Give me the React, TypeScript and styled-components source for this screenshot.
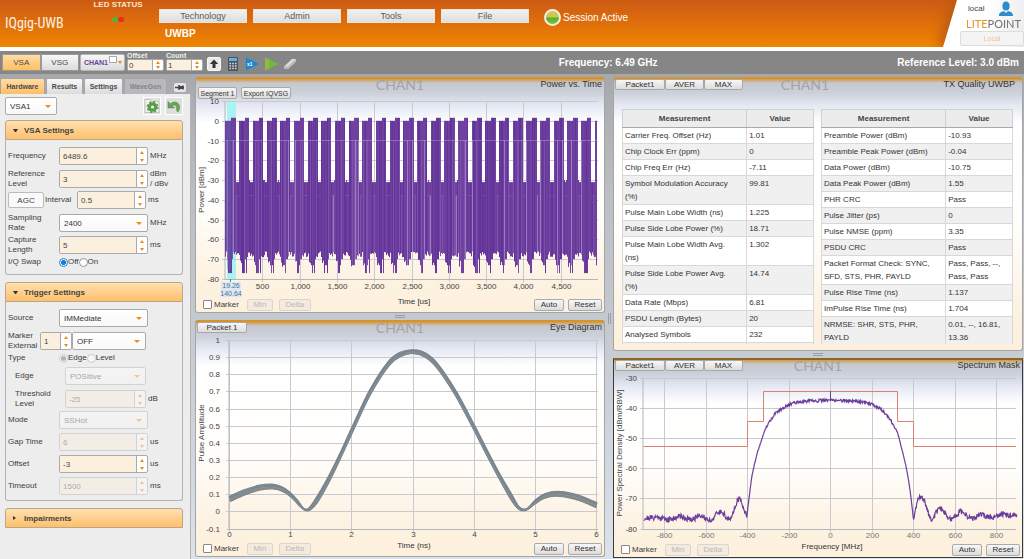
import React, { useId } from "react";
import styled, { createGlobalStyle, css } from "styled-components";

const SANS = '"Liberation Sans", Arial, sans-serif';
const PURPLE = "#6b3d9c";
const ORANGE = "#ee8a17";

const GlobalStyle = createGlobalStyle`
  *, *::before, *::after { box-sizing: border-box; }
  html, body { margin: 0; padding: 0; }
  body { background: #c6cad1; }
  #root { font-family: ${SANS}; font-size: 8px; color: #3c3c3c; }
  button, input, select { font-family: inherit; font-size: inherit; color: inherit; margin: 0; padding: 0; border: 0; }
  button { cursor: pointer; white-space: nowrap; }
`;

/* ---------- page frame ---------- */

const Page = styled.div`
  display: flex;
  flex-direction: column;
  min-height: 100vh;
  background: linear-gradient(#a7a8ab 74px, #bcbfc4 200px, #c4c8cf 320px, #dbe2ea);
`;

const Header = styled.header`
  display: flex;
  height: 47px;
  background: linear-gradient(#cc5a14, #df6f0b 50%, #f08500);
  color: #fff;
`;

const Logo = styled.h1`
  margin: 0;
  padding: 13px 0 0 5px;
  width: 88px;
  font: 400 14px/20px "Liberation Sans Narrow", "Roboto Condensed", "Open Sans Condensed", ${SANS};
  color: #fdf1e4;
`;

const LedBlock = styled.div`
  width: 60px;
  display: flex;
  flex-direction: column;
  align-items: center;
  gap: 7px;
  font-weight: bold;
  line-height: 10px;
  white-space: nowrap;
  color: #fbe6cf;
`;

const Leds = styled.div`
  display: flex;
`;

const Led = styled.span<{ $color: string }>`
  width: 6px;
  height: 5px;
  border-radius: 3px;
  background: ${(p) => p.$color};
`;

const NavBlock = styled.div`
  padding: 9px 0 0 11px;
`;

const Nav = styled.nav`
  display: flex;
  gap: 6px;
`;

const NavButton = styled.button`
  width: 88px;
  height: 14px;
  font-size: 9px;
  color: #5b5b5b;
  background: linear-gradient(#f1f1f1, #dedede);
  border: 1px solid #f3e4d6;
`;

const Mode = styled.div`
  padding: 5px 0 0 6px;
  font: bold 10px/12px ${SANS};
`;

const Session = styled.div`
  display: flex;
  align-items: center;
  align-self: flex-start;
  gap: 2px;
  margin: 9px 0 0 15px;
  font-size: 10px;
  line-height: 17px;
  white-space: nowrap;
`;

const SessionLed = styled.span`
  width: 17px;
  height: 17px;
  border: 2px solid #f4ede2;
  border-radius: 50%;
  background: linear-gradient(#cdc853 45%, #57ae27 55%, #7ac63f);
`;

const AccountShadow = styled.div`
  margin-left: auto;
  filter: drop-shadow(-5px 0 6px #b95812);
  clip-path: inset(0 0 0 -24px);
`;

const Account = styled.div`
  display: grid;
  grid-template-rows: 17px 14px 15px;
  width: 81px;
  height: 47px;
  padding-left: 17px;
  background: linear-gradient(100deg, #fff 50%, #ececee);
  clip-path: polygon(14px 0, 100% 0, 100% 100%, 0 100%);
  color: #444;
`;

const AccountUser = styled.div`
  display: flex;
  align-items: center;
  justify-content: space-between;
  padding: 0 10px 0 8px;
  line-height: 17px;
`;

const Brand = styled.div`
  padding-left: 6px;
  font: 400 11px/13px Lato, ${SANS};
  color: #6f7072;
  span { color: #e8942c; }
`;

const LocalButton = styled.button`
  border: 1px solid #dcdcdc;
  border-radius: 2px;
  background: #f4f4f4;
  font-size: 7px;
  color: #efbfa0;
`;

/* ---------- toolbar ---------- */

const Toolbar = styled.div`
  display: flex;
  align-items: center;
  height: 27px;
  padding: 0 5px 0 2px;
  border-top: 4px solid #fff;
  background: #868686;
  color: #fff;
`;

const Segmented = styled.div`
  display: flex;
  width: 77px;
  height: 17px;
`;

const grey = css`
  background: linear-gradient(#f7f7f7, #dcdcdc);
  color: #4a4a4a;
`;

const SegmentButton = styled.button<{ $on?: boolean }>`
  flex: 1;
  border: 1px solid #9a9a9a;
  ${(p) => (p.$on ? "background: linear-gradient(#ffdca6, #ffbf62); color: #4a4a4a;" : grey)}
`;

const ChannelButton = styled.button`
  display: flex;
  justify-content: flex-end;
  align-items: center;
  gap: 1px;
  width: 45px;
  height: 17px;
  margin-left: 1px;
  padding: 0 2px;
  border: 1px solid #b5b5b5;
  border-radius: 2px;
  font-size: 7px;
  font-weight: bold;
  ${grey}
  color: #68439b;
`;

const ChannelMark = styled.span`
  width: 8px;
  height: 7px;
  margin-bottom: 7px;
  border: 1px solid #aaa;
  background: #fff;
`;

const Counter = styled.div`
  width: 37px;
  margin-left: 2px;
  margin-bottom: 2px;
  label { display: block; font: bold 7px/7px ${SANS}; color: #f0f0f0; }
`;

const ToolButton = styled.button<{ $face?: boolean }>`
  display: grid;
  place-items: center;
  width: 14px;
  height: 14px;
  margin-top: 2px;
  background: none;
  ${(p) => p.$face && "background: #e9e9e9; border: 1px solid #f8f8f8; border-radius: 2px;"}
`;

const Tools = styled.div`
  display: flex;
  gap: 5px;
  margin-left: 4px;
`;

const Readout = styled.div<{ $grow?: boolean }>`
  font: bold 10px/14px ${SANS};
  white-space: nowrap;
  ${(p) => p.$grow && "flex: 1; text-align: center; padding-left: 22px;"}
`;

/* ---------- form controls ---------- */

const Triangle = styled.i<{ $up?: boolean; $wide?: boolean }>`
  display: block;
  width: 0;
  height: 0;
  margin: 0 auto;
  border: ${(p) => (p.$wide ? 3 : 2)}px solid transparent;
  ${(p) => (p.$up ? `border-bottom: 3px solid ${ORANGE}; border-top: 0;` : `border-top: 3px solid ${ORANGE}; border-bottom: 0;`)}
`;

const SpinBox = styled.div<{ $h: number; $off?: boolean }>`
  display: flex;
  min-width: 0;
  height: ${(p) => p.$h}px;
  border: 1px solid #aaa;
  border-radius: 2px;
  background: #fff;
  opacity: ${(p) => (p.$off ? 0.4 : 1)};
  overflow: hidden;
`;

const SpinInput = styled.input<{ $pad: number }>`
  flex: 1;
  min-width: 0;
  padding-left: ${(p) => p.$pad}px;
  background: #fbf0de;
  border-right: 1px solid #aaa;
  color: #444;
`;

const SpinArrows = styled.div`
  display: flex;
  flex-direction: column;
  justify-content: center;
  width: 10px;
  button { flex: 1; display: grid; place-items: center; background: none; }
`;

function Spin({ id, value, off, h = 18, pad = 3, label }: { id?: string; value: string; off?: boolean; h?: number; pad?: number; label?: string }) {
  return (
    <SpinBox $h={h} $off={off}>
      <SpinInput id={id} defaultValue={value} disabled={off} $pad={pad} aria-label={label} />
      <SpinArrows>
        <button type="button" aria-label="Increase" disabled={off}><Triangle $up /></button>
        <button type="button" aria-label="Decrease" disabled={off}><Triangle /></button>
      </SpinArrows>
    </SpinBox>
  );
}

const PickBox = styled.div<{ $off?: boolean }>`
  display: grid;
  grid-template-columns: 1fr 16px;
  align-items: center;
  min-width: 0;
  height: 18px;
  border: 1px solid #aaa;
  border-radius: 2px;
  background: linear-gradient(#fff, #f8f8f8);
  opacity: ${(p) => (p.$off ? 0.4 : 1)};
  select {
    grid-area: 1 / 1 / 2 / 3;
    height: 16px;
    padding-left: 4px;
    appearance: none;
    background: none;
    color: #333;
    opacity: 1;
  }
  i { grid-area: 1 / 2; pointer-events: none; }
`;

function Pick({ id, value, off, label }: { id?: string; value: string; off?: boolean; label?: string }) {
  return (
    <PickBox $off={off}>
      <select id={id} disabled={off} aria-label={label} defaultValue={value}>
        <option>{value}</option>
      </select>
      <Triangle $wide />
    </PickBox>
  );
}

const Radio = styled.input`
  appearance: none;
  width: 9px;
  height: 9px;
  border: 1px solid #999;
  border-radius: 50%;
  background: #fff;
  &:checked { background: radial-gradient(#1b80d0 45%, #fff 50%); border-color: #1b80d0; }
  &:disabled { border-color: #ccc; background: #f6f6f6; }
  &:disabled:checked { background: radial-gradient(#b5b5b5 45%, #f4f4f4 50%); }
`;

const RadioSet = styled.div`
  display: flex;
  align-items: center;
  line-height: 10px;
  label { display: flex; align-items: center; }
`;

/* ---------- sidebar ---------- */

const Body = styled.div`
  display: flex;
  flex: 1;
  padding: 3px 1px 0 0;
`;

const Sidebar = styled.aside`
  display: flex;
  flex-direction: column;
  width: 191px;
  margin-right: 4px;
`;

const SideTabs = styled.div`
  display: flex;
  align-items: flex-end;
  gap: 1px;
  height: 17px;
`;

const SideTab = styled.button<{ $w: number; $kind?: "on" | "off" }>`
  width: ${(p) => p.$w}px;
  height: 16px;
  border: 1px solid #a5a5a5;
  border-bottom: 0;
  border-radius: 2px 2px 0 0;
  font-size: 7px;
  font-weight: bold;
  ${grey}
  ${(p) => p.$kind === "on" && "background: linear-gradient(#ffdca6, #ffbf62);"}
  ${(p) => p.$kind === "off" && "background: #b9b9bb; color: #858588;"}
`;

const PinButton = styled.button`
  width: 12px;
  height: 9px;
  margin: 0 0 2px 6px;
  border-radius: 2px;
  background: #e6e6e6;
  svg { display: block; }
`;

const SidePanel = styled.div`
  display: flex;
  flex-direction: column;
  gap: 7px;
  flex: 1;
  padding: 3px 7px 0 5px;
  border-right: 1px solid #b2b4b8;
  background: #ededed;
`;

const SideTop = styled.div`
  display: grid;
  grid-template-columns: 52px 1fr 18px 18px;
  column-gap: 4px;
  height: 16px;
`;

const IconButton = styled.button`
  grid-column: auto;
  display: grid;
  place-items: center;
  width: 18px;
  height: 18px;
  border: 1px solid #fff;
  background: #dedede;
`;

const Section = styled.section`
  border-radius: 3px;
`;

const SectionHead = styled.button`
  display: flex;
  align-items: center;
  gap: 6px;
  width: 100%;
  height: 20px;
  padding-left: 7px;
  border: 1px solid #b7a78e;
  border-radius: 3px 3px 0 0;
  background: linear-gradient(#ffe0ad, #ffd193 45%, #ffc069);
  font-weight: bold;
  color: #444;
`;

const SectionBody = styled.div<{ $end: number }>`
  display: grid;
  gap: 4px;
  padding: 7px 2px ${(p) => p.$end}px;
  border: 1px solid #b3b3b3;
  border-top: 0;
  border-radius: 0 0 3px 3px;
`;

const Row = styled.div<{ $cols: string; $indent?: boolean; $short?: boolean }>`
  display: grid;
  grid-template-columns: ${(p) => p.$cols};
  align-items: center;
  height: ${(p) => (p.$short ? 10 : 18)}px;
  padding-left: ${(p) => (p.$indent ? 7 : 0)}px;
  line-height: 10px;
`;

const Unit = styled.span`
  padding-left: 2px;
  white-space: nowrap;
`;

const AgcButton = styled.button`
  width: 36px;
  height: 16px;
  border: 1px solid #bbb;
  border-radius: 2px;
  background: #fafafa;
`;

const WIDE = "51px 89px 1fr";
const NARROW = "50px 81px 1fr";

type FieldProps = { label: React.ReactNode; value: string; unit?: React.ReactNode; pick?: boolean; off?: boolean; indent?: boolean };

function Field({ label, value, unit, pick, off, indent }: FieldProps) {
  const id = useId();
  return (
    <Row $cols={indent ? NARROW : WIDE} $indent={indent}>
      <label htmlFor={id}>{label}</label>
      {pick ? <Pick id={id} value={value} off={off} /> : <Spin id={id} value={value} off={off} />}
      <Unit>{unit}</Unit>
    </Row>
  );
}

const HeadMark = styled.i<{ $open?: boolean }>`
  width: 5px;
  border: 2px solid transparent;
  ${(p) => (p.$open ? "border-top: 3px solid #333; border-bottom: 0;" : "border-left: 3px solid #333; border-right: 0; width: 3px; margin-right: 2px;")}
`;

/* ---------- panels ---------- */

const Column = styled.div`
  display: flex;
  flex-direction: column;
  flex: 1;
  min-width: 0;
`;

const Gap = styled.div<{ $h: number }>`
  display: grid;
  place-items: center;
  height: ${(p) => p.$h}px;
  &::after { content: ""; width: 10px; height: 3px; border: 1px solid #9a9da2; border-width: 1px 0; }
`;

const Divider = styled.div`
  display: grid;
  place-items: center;
  width: 8px;
  &::after { content: ""; width: 3px; height: 11px; border: 1px solid #9a9da2; border-width: 0 1px; }
`;

const Panel = styled.section<{ $active?: boolean }>`
  border: 1px solid ${(p) => (p.$active ? "#3a3a3c" : "#a3a4a8")};
  border-top: 2px solid ${(p) => (p.$active ? "#8d6526" : "#d8922c")};
  border-radius: ${(p) => (p.$active ? 0 : 3)}px;
  background: linear-gradient(#d39b45, #c6c8ce 4px, #cbd0da 14px, #e3e8f2 26px, #fff 44px, #fffefb 55%, #fdf1e0 88%, #fdf0dd);
`;

const PanelHead = styled.header`
  display: grid;
  grid-template-columns: 1fr auto 1fr;
  height: 14px;
  position: relative;
`;

const Tabs = styled.div<{ $drop?: boolean }>`
  display: flex;
  gap: ${(p) => (p.$drop ? 4 : 0)}px;
  padding: ${(p) => (p.$drop ? "8px 0 0 2px" : "0 0 0 1px")};
`;

const Tab = styled.button<{ $w: number; $small?: boolean }>`
  flex: none;
  width: ${(p) => p.$w}px;
  height: ${(p) => (p.$small ? 12 : 11)}px;
  border: 1px solid #a9a9a9;
  border-radius: 2px;
  font-size: ${(p) => (p.$small ? 7 : 8)}px;
  line-height: 9px;
  ${grey}
  color: #333;
`;

const Watermark = styled.span<{ $shift?: number }>`
  margin-right: ${(p) => p.$shift || 0}px;
  font: 400 14px/12px Lato, ${SANS};
  color: #a2a4a9;
`;

const PanelTitle = styled.h2<{ $inset?: boolean }>`
  margin: 0;
  padding-right: ${(p) => (p.$inset ? 7 : 2)}px;
  font: 400 9px/10px ${SANS};
  text-align: right;
  white-space: nowrap;
  color: #333;
`;

const ChartSvg = styled.svg`
  display: block;
  width: 100%;
  height: auto;
  font-family: ${SANS};
  font-size: 8px;
  fill: #444;
`;

const PanelFoot = styled.footer`
  display: grid;
  grid-template-columns: 1fr auto 1fr;
  height: 15px;
  padding: 0 2px 0 7px;
`;

const FootGroup = styled.div<{ $end?: boolean }>`
  display: flex;
  align-items: center;
  gap: ${(p) => (p.$end ? 4 : 6)}px;
  justify-content: ${(p) => (p.$end ? "flex-end" : "flex-start")};
  label { display: flex; align-items: center; gap: 2px; margin-right: 2px; }
`;

const Tick = styled.input`
  appearance: none;
  width: 9px;
  height: 9px;
  border: 1px solid #888;
  border-radius: 1px;
  background: #fff;
`;

const FootButton = styled.button<{ $w: number }>`
  width: ${(p) => p.$w}px;
  height: 12px;
  border: 1px solid #aaa;
  border-radius: 2px;
  line-height: 9px;
  ${grey}
  color: #333;
  &:disabled { background: #f3ebe0; border-color: #dcd5cc; color: #bdb8b1; }
`;

const AxisTitle = styled.span`
  padding-left: 23px;
  line-height: 10px;
  color: #333;
`;

function ChartFoot({ axis }: { axis: string }) {
  return (
    <PanelFoot>
      <FootGroup>
        <label><Tick type="checkbox" />Marker</label>
        <FootButton $w={26} disabled>Min</FootButton>
        <FootButton $w={32} disabled>Delta</FootButton>
      </FootGroup>
      <AxisTitle>{axis}</AxisTitle>
      <FootGroup $end>
        <FootButton $w={30}>Auto</FootButton>
        <FootButton $w={34}>Reset</FootButton>
      </FootGroup>
    </PanelFoot>
  );
}

/* ---------- charts ---------- */

function random(seed: number) {
  let s = seed;
  return () => {
    s = (s * 1664525 + 1013904223) % 4294967296;
    return s / 4294967296;
  };
}

type Point = [number, number];

function smooth(points: Point[]) {
  let d = `M${points[0][0].toFixed(1)} ${points[0][1].toFixed(1)}`;
  for (let i = 0; i < points.length - 1; i++) {
    const a = points[Math.max(0, i - 1)];
    const b = points[i];
    const c = points[i + 1];
    const e = points[Math.min(points.length - 1, i + 2)];
    const n = [b[0] + (c[0] - a[0]) / 6, b[1] + (c[1] - a[1]) / 6, c[0] - (e[0] - b[0]) / 6, c[1] - (e[1] - b[1]) / 6, c[0], c[1]];
    d += "C" + n.map((v) => v.toFixed(1)).join(" ");
  }
  return d;
}

type AxisProps = { xs: [number, string][]; ys: [number, string][]; left: number; right: number; labelY: number; title: string; titleY: number; muted?: boolean; labelX: number };

function Axes({ xs, ys, left, right, labelY, title, titleY, muted, labelX }: AxisProps) {
  const top = ys[0][0];
  const bottom = ys[ys.length - 1][0];
  return (
    <g>
      <path
        d={ys.map(([y]) => `M${left - 3} ${y}H${right}`).join("") + xs.map(([x]) => `M${x} ${top}V${bottom + 3}`).join("")}
        stroke="#c9cacf"
        fill="none"
      />
      <path d={`M${left} ${top}V${bottom}H${right}`} stroke="#b4b6bc" fill="none" />
      {ys.map(([y, t]) => (
        <text key={t} x={labelX} y={y + 2} textAnchor="end">{t}</text>
      ))}
      {xs.map(([x, t]) => (
        <text key={t} x={x} y={labelY} textAnchor="middle" fill={muted ? "#777" : undefined}>{t}</text>
      ))}
      <text transform={`translate(8 ${titleY}) rotate(-90)`} textAnchor="middle">{title}</text>
    </g>
  );
}

const POWER_TONES = ["#62349a", "#6b3d9c", "#7041a1", "#7d52aa", "#9a7bbf"];

function powerTraces() {
  const rnd = random(7);
  const y = (db: number) => 8 + (10 - db) * 1.978;
  const period = 13.67;
  const paths = POWER_TONES.map(() => "");
  for (let x = 0; x < 372; x += 1) {
    const phase = x % period;
    const inBurst = phase < 10.3;
    const top = !inBurst ? -31 + (rnd() > 0.85 ? 1 : 0) : phase < 5.7 ? 0 : 1.5;
    const r = rnd();
    let low = -66 - rnd() * 3;
    if (phase > 1 && phase < 3) low = -70 - rnd() * 4;
    else if (phase >= 3 && phase < 6) low = r > 0.35 ? -77 : -73;
    else if (phase >= 6 && phase < 8) low = r > 0.75 ? -77 : -70;
    const t = rnd();
    const tone = t > 0.95 ? 4 : t > 0.78 ? 3 : t > 0.55 ? 2 : t > 0.25 ? 1 : 0;
    const px = 29.5 + x;
    const seam = inBurst ? y(-10) : y(-38);
    paths[tone] += `M${px} ${seam.toFixed(1)}V${y(low).toFixed(1)}`;
    paths[tone > 2 ? 2 : tone] += `M${px} ${y(top).toFixed(1)}V${seam.toFixed(1)}`;
  }
  return paths;
}

function PowerChart() {
  const ys: [number, string][] = [10, 0, -10, -20, -30, -40, -50, -60, -70, -80].map((v, i) => [Math.round(8 + i * 19.78) + 0.5, String(v)]);
  const xs: [number, string][] = [500, 1000, 1500, 2000, 2500, 3000, 3500, 4000, 4500].map((v) => [Math.round(29 + v * 0.0746) + 0.5, v.toLocaleString("en-US")]);
  return (
    <ChartSvg viewBox="0 0 408 204" role="img" aria-label="Power vs. Time chart">
      <rect x="31" y="8" width="9" height="178" fill="#a9f3f2" />
      <Axes xs={xs} ys={ys} left={29} right={402} labelX={23} labelY={196} title="Power [dBm]" titleY={97} />
      {powerTraces().map((d, i) => (
        <path key={i} d={d} stroke={POWER_TONES[i]} fill="none" />
      ))}
      <rect x="31" y="28" width="4" height="148" fill="#4f6fb5" opacity="0.35" />
      <rect x="25" y="189" width="20" height="15" fill="#dfe7ee" />
      <path d="M34.500 186v3" stroke="#2f86c8" />
      <g fontSize="7" fill="#3f73ac" textAnchor="middle">
        <text x="35" y="195">19.26</text>
        <text x="35" y="203">140.64</text>
      </g>
    </ChartSvg>
  );
}

const EYE: Point[] = [
  [0, 0.075], [0.25, 0.115], [0.5, 0.142], [0.7, 0.148], [0.85, 0.135], [1, 0.1], [1.13, 0.05], [1.22, 0.015], [1.3, 0.015], [1.42, 0.065],
  [1.6, 0.175], [1.8, 0.32], [2, 0.475], [2.3, 0.7], [2.6, 0.865], [2.8, 0.92], [3, 0.935], [3.2, 0.915], [3.4, 0.85], [3.7, 0.69], [4, 0.49],
  [4.2, 0.35], [4.4, 0.215], [4.6, 0.09], [4.73, 0.022], [4.85, 0.014], [5, 0.06], [5.15, 0.093], [5.35, 0.106], [5.6, 0.093], [5.8, 0.07], [6, 0.038],
];

/* Strands in paint order: offset from the mean trace and colour. */
const STRANDS: [number, string][] = [
  [-1, "#77787c"], [1, "#6d7480"], [0.6, "#8fb04a"], [-0.6, "#7b5f8e"], [0.2, "#5d97a3"], [-0.3, "#c98a48"],
  [0.8, "#7f8a94"], [-0.8, "#86907a"], [0.4, "#4f86bd"], [0, "#a87f62"], [-0.5, "#6f8fae"],
];

function EyeChart() {
  const y = (v: number) => 4.5 + (1 - v) * 171.4;
  const ys: [number, string][] = ["1", "0.9", "0.8", "0.7", "0.6", "0.5", "0.4", "0.3", "0.2", "0.1", "0", "-0.1"].map((t, i) => [Math.round(4 + i * 17.14) + 0.5, t]);
  const xs: [number, string][] = [0, 1, 2, 3, 4, 5, 6].map((v) => [Math.round(33 + v * 61.2) + 0.5, String(v)]);
  return (
    <ChartSvg viewBox="0 0 408 205" role="img" aria-label="Eye Diagram chart">
      <Axes xs={xs} ys={ys} left={33} right={402} labelX={24} labelY={201} title="Pulse Amplitude" titleY={97} />
      {STRANDS.map(([k, color], i) => {
        const points = EYE.map(([t, v]): Point => {
          const spread = v < 0.03 ? 0.005 : v < 0.2 ? 0.014 : 0.011;
          const side = t < 3 ? -1 : 1;
          return [33.5 + (t + side * k * 0.01) * 61.2, y(v + k * spread)];
        });
        return <path key={i} d={smooth(points)} fill="none" stroke={color} strokeWidth="1.2" strokeOpacity="0.9" />;
      })}
    </ChartSvg>
  );
}

const SPECTRUM: Point[] = [
  [-900, -76.5], [-830, -76], [-780, -77], [-720, -75.6], [-670, -77.2], [-630, -75.2], [-578, -77.3], [-540, -74.5], [-520, -74], [-505, -76], [-482, -77.2],
  [-465, -73.5], [-450, -70.5], [-438, -70], [-425, -71.5], [-412, -74.5], [-403, -76], [-395, -71], [-380, -63], [-365, -58], [-350, -54], [-335, -51],
  [-320, -47.8], [-300, -45], [-270, -42], [-240, -40.2], [-210, -39.2], [-180, -38], [-100, -37.5], [0, -37.2], [100, -37.4], [170, -37.8], [210, -39],
  [240, -40], [270, -42], [300, -45], [322, -47.8], [335, -51], [350, -55], [365, -59.5], [380, -65.5], [392, -72], [400, -77], [412, -73], [420, -70],
  [438, -68.8], [455, -71], [470, -74.5], [490, -77], [510, -74.5], [530, -73.1], [555, -75], [582, -77], [605, -75.5], [625, -74], [680, -76.8],
  [720, -75.3], [780, -76.2], [830, -74.9], [860, -75.8], [898, -75.6],
];

function spectrumPath() {
  const rnd = random(21);
  let d = "";
  let seg = 0;
  for (let f = -900; f <= 898; f += 2.4) {
    while (seg < SPECTRUM.length - 2 && SPECTRUM[seg + 1][0] < f) seg++;
    const [f0, a] = SPECTRUM[seg];
    const [f1, b] = SPECTRUM[seg + 1];
    const steep = Math.abs(f) > 310 && Math.abs(f) < 405;
    const noise = (rnd() - 0.5) * (steep ? 0.4 : Math.abs(f) > 405 ? 1.9 : 1);
    const v = a + ((b - a) * (f - f0)) / (f1 - f0) + noise;
    d += `${d ? "L" : "M"}${(216.5 + f * 0.2075).toFixed(1)} ${(4.5 + (-30 - v) * 3.01).toFixed(1)}`;
  }
  return d;
}

function SpectrumChart() {
  const ys: [number, string][] = [-30, -40, -50, -60, -70, -80].map((v, i) => [Math.round(4 + i * 30.1) + 0.5, String(v)]);
  const xs: [number, string][] = [-800, -600, -400, -200, 0, 200, 400, 600, 800].map((v) => [Math.round(216 + v * 0.2075) + 0.5, String(v)]);
  return (
    <ChartSvg viewBox="0 0 408 168" role="img" aria-label="Spectrum Mask chart">
      <Axes xs={xs} ys={ys} left={29} right={402} labelX={23} labelY={164} title="Power Spectral Density [dBm/RBW]" titleY={79} muted />
      <path d="M29.500 72.500H133.500V47.500H149.500V17.500H283.500V47.500H299.500V72.500H402" fill="none" stroke="#d8826f" />
      <path d={spectrumPath()} fill="none" stroke={PURPLE} strokeWidth="1.2" />
      <path d="M216.500 17V27" stroke={PURPLE} />
    </ChartSvg>
  );
}

/* ---------- results table ---------- */

const Tables = styled.div`
  display: grid;
  grid-template-columns: 1fr 1fr;
  align-items: start;
  gap: 7px;
  height: 235px;
  margin: 16px 9px 6px 8px;
  overflow: hidden;
`;

const Table = styled.table`
  width: 100%;
  table-layout: fixed;
  border-collapse: collapse;
  line-height: 13px;
  background: #fff;
  color: #333;
  th { height: 18px; padding: 0; background: #ececec; border: 1px solid #d0d0d0; border-bottom-color: #aaa; color: #444; }
  th:first-child { width: 65%; }
  td { padding: 1px 2px; border: 1px solid #d8d8d8; vertical-align: top; }
  tbody tr:nth-child(even) { background: #f0f0f0; }
`;

const LEFT = [
  ["Carrier Freq. Offset (Hz)", "1.01"], ["Chip Clock Err (ppm)", "0"], ["Chip Freq Err (Hz)", "-7.11"], ["Symbol Modulation Accuracy\n(%)", "99.81"],
  ["Pulse Main Lobe Width (ns)", "1.225"], ["Pulse Side Lobe Power (%)", "18.71"], ["Pulse Main Lobe Width Avg.\n(ns)", "1.302"],
  ["Pulse Side Lobe Power Avg.\n(%)", "14.74"], ["Data Rate (Mbps)", "6.81"], ["PSDU Length (Bytes)", "20"], ["Analysed Symbols", "232"], ["", ""],
];

const RIGHT = [
  ["Preamble Power (dBm)", "-10.93"], ["Preamble Peak Power (dBm)", "-0.04"], ["Data Power (dBm)", "-10.75"], ["Data Peak Power (dBm)", "1.55"],
  ["PHR CRC", "Pass"], ["Pulse Jitter (ps)", "0"], ["Pulse NMSE (ppm)", "3.35"], ["PSDU CRC", "Pass"],
  ["Packet Format Check: SYNC,\nSFD, STS, PHR, PAYLD", "Pass, Pass, --,\nPass, Pass"], ["Pulse Rise Time (ns)", "1.137"],
  ["ImPulse Rise Time (ns)", "1.704"], ["NRMSE: SHR, STS, PHR,\nPAYLD", "0.01, --, 16.81,\n13.36"],
];

const Cell = styled.td`
  white-space: pre-line;
`;

function Results({ rows }: { rows: string[][] }) {
  return (
    <Table>
      <thead>
        <tr><th>Measurement</th><th>Value</th></tr>
      </thead>
      <tbody>
        {rows.map(([name, value], i) => (
          <tr key={i}><Cell>{name}</Cell><Cell>{value}</Cell></tr>
        ))}
      </tbody>
    </Table>
  );
}

function PacketTabs() {
  return (
    <Tabs>
      <Tab $w={50}>Packet1</Tab>
      <Tab $w={39}>AVER</Tab>
      <Tab $w={39}>MAX</Tab>
    </Tabs>
  );
}

/* ---------- icons ---------- */

const UserIcon = () => (
  <svg width="16" height="15" viewBox="0 0 16 15" fill="#2f8ccc" aria-hidden="true">
    <ellipse cx="8" cy="5" rx="3.600" ry="4.500" />
    <path d="M1 15c0-3 1.500-4 5-5l2 2 2-2c3.500 1 5 2 5 5z" />
  </svg>
);

const UpIcon = () => (
  <svg width="10" height="10" viewBox="0 0 10 10" aria-hidden="true"><path d="M5 .5 9.200 5H6.500v4h-3V5H.8z" fill="#333" /></svg>
);

const CalcIcon = () => (
  <svg width="12" height="14" viewBox="0 0 12 14" aria-hidden="true">
    <rect x="1" width="10" height="14" rx="1" fill="#4b5560" />
    <rect x="2" y="1" width="8" height="3" fill="#5fb1e6" />
    <path d="M2.500 6.500h7M2.500 9h7M2.500 11.500h7" stroke="#d5d9dc" strokeWidth="1.500" strokeDasharray="1.600 1.100" />
  </svg>
);

const PlayIcon = ({ color, text }: { color: string; text?: string }) => (
  <svg width="14" height="14" viewBox="0 0 14 14" aria-hidden="true">
    <path d="M1 .5V13.500L14 7z" fill={color} />
    {text ? <text x="2" y="9" fontSize="5" fontWeight="bold" fill="#fff">{text}</text> : <path d="M5 2.500v9L14 7z" fill="#6cbd31" />}
  </svg>
);

const EraserIcon = () => (
  <svg width="14" height="14" viewBox="0 0 14 14" aria-hidden="true">
    <path d="M1 9.500 9 2h4v2.500L5 12H1z" fill="#dadada" />
    <path d="M1 9.500h4V12H1zM5 9.500 13 2v2.500L5 12z" fill="#b9b9b9" />
  </svg>
);

const PinIcon = () => (
  <svg width="12" height="9" viewBox="0 0 12 9" aria-hidden="true"><path d="M1 4.500h4M5 2v5M5 4.500h5M9 2.500v4" stroke="#444" strokeWidth="1.500" fill="none" /><path d="M5 3h4v3H5z" fill="#444" /></svg>
);

const GearIcon = () => (
  <svg width="16" height="16" viewBox="0 0 16 16" aria-hidden="true">
    <path d="M1 14.500V1.500h5l1.500 2h7.500v11z" fill="#f2f2f2" stroke="#bbb" strokeWidth=".8" />
    <circle cx="8.500" cy="9" r="3.200" fill="none" stroke="#55a046" strokeWidth="3.200" />
    <circle cx="8.500" cy="9" r="5.200" fill="none" stroke="#55a046" strokeWidth="1.500" strokeDasharray="2.100 1.980" />
  </svg>
);

const UndoIcon = () => (
  <svg width="16" height="16" viewBox="0 0 16 16" aria-hidden="true">
    <path d="M2 3.500V10h6.500L6.300 7.800C8 6.200 11.300 7 10.500 12.800L12 14C16.500 8 11 .5 4.300 5.800z" fill="#67a656" stroke="#4d8741" strokeWidth=".5" />
  </svg>
);

/* ---------- application ---------- */

export default function App() {
  return (
    <Page>
      <GlobalStyle />
      <Header>
        <Logo>IQgig-UWB</Logo>
        <LedBlock>
          LED STATUS
          <Leds><Led $color="#51b53b" /><Led $color="#e0321b" /></Leds>
        </LedBlock>
        <NavBlock>
          <Nav>
            {["Technology", "Admin", "Tools", "File"].map((t) => <NavButton key={t}>{t}</NavButton>)}
          </Nav>
          <Mode>UWBP</Mode>
        </NavBlock>
        <Session><SessionLed />Session Active</Session>
        <AccountShadow>
          <Account>
            <AccountUser>local<UserIcon /></AccountUser>
            <Brand><span>LITE</span>POINT</Brand>
            <LocalButton>Local</LocalButton>
          </Account>
        </AccountShadow>
      </Header>

      <Toolbar>
        <Segmented>
          <SegmentButton $on>VSA</SegmentButton>
          <SegmentButton>VSG</SegmentButton>
        </Segmented>
        <ChannelButton>CHAN1<ChannelMark /><span><Triangle /></span></ChannelButton>
        <Counter><label htmlFor="offset">Offset</label><Spin id="offset" value="0" h={12} pad={1} /></Counter>
        <Counter><label htmlFor="count">Count</label><Spin id="count" value="1" h={12} pad={1} /></Counter>
        <Tools>
          <ToolButton $face aria-label="Up"><UpIcon /></ToolButton>
          <ToolButton aria-label="Calculator"><CalcIcon /></ToolButton>
          <ToolButton aria-label="Run once"><PlayIcon color="#1787d6" text="x1" /></ToolButton>
          <ToolButton aria-label="Run"><PlayIcon color="#8dbb3f" /></ToolButton>
          <ToolButton aria-label="Clear"><EraserIcon /></ToolButton>
        </Tools>
        <Readout $grow>Frequency: 6.49 GHz</Readout>
        <Readout>Reference Level: 3.0 dBm</Readout>
      </Toolbar>

      <Body>
        <Sidebar>
          <SideTabs>
            <SideTab $w={45} $kind="on">Hardware</SideTab>
            <SideTab $w={37}>Results</SideTab>
            <SideTab $w={39}>Settings</SideTab>
            <SideTab $w={43} $kind="off">WaveGen</SideTab>
            <PinButton aria-label="Pin"><PinIcon /></PinButton>
          </SideTabs>
          <SidePanel>
            <SideTop>
              <Pick value="VSA1" label="Device" />
              <span />
              <IconButton aria-label="Configuration"><GearIcon /></IconButton>
              <IconButton aria-label="Undo"><UndoIcon /></IconButton>
            </SideTop>
            <Section>
              <SectionHead><HeadMark $open />VSA Settings</SectionHead>
              <SectionBody $end={7}>
                <Field label="Frequency" value="6489.6" unit="MHz" />
                <Field label={<>Reference<br />Level</>} value="3" unit={<>dBm<br />/ dBv</>} />
                <Row $cols="37px 32px 69px 1fr">
                  <AgcButton>AGC</AgcButton>
                  <label htmlFor="interval">Interval</label>
                  <Spin id="interval" value="0.5" />
                  <Unit>ms</Unit>
                </Row>
                <Field label={<>Sampling<br />Rate</>} value="2400" unit="MHz" pick />
                <Field label={<>Capture<br />Length</>} value="5" unit="ms" />
                <Row $cols="51px 1fr" $short>
                  <span>I/Q Swap</span>
                  <RadioSet>
                    <label><Radio type="radio" name="swap" defaultChecked />Off</label>
                    <label><Radio type="radio" name="swap" />On</label>
                  </RadioSet>
                </Row>
              </SectionBody>
            </Section>
            <Section>
              <SectionHead><HeadMark $open />Trigger Settings</SectionHead>
              <SectionBody $end={5}>
                <Field label="Source" value="IMMediate" pick />
                <Row $cols="32px 32px 74px 1fr">
                  <label htmlFor="marker">Marker<br />External</label>
                  <Spin id="marker" value="1" />
                  <Pick value="OFF" label="Marker state" />
                </Row>
                <Row $cols="51px 1fr" $short>
                  <span>Type</span>
                  <RadioSet>
                    <label><Radio type="radio" name="type" defaultChecked disabled />Edge</label>
                    <label><Radio type="radio" name="type" disabled />Level</label>
                  </RadioSet>
                </Row>
                <Field label="Edge" value="POSitive" pick off indent />
                <Field label={<>Threshold<br />Level</>} value="-25" unit="dB" off indent />
                <Field label="Mode" value="SSHot" pick off />
                <Field label="Gap Time" value="6" unit="us" off />
                <Field label="Offset" value="-3" unit="us" />
                <Field label="Timeout" value="1500" unit="ms" off />
              </SectionBody>
            </Section>
            <Section>
              <SectionHead><HeadMark />Impairments</SectionHead>
            </Section>
          </SidePanel>
        </Sidebar>

        <Column>
          <Panel>
            <PanelHead>
              <Tabs $drop>
                <Tab $w={39} $small>Segment 1</Tab>
                <Tab $w={50} $small>Export IQVSG</Tab>
              </Tabs>
              <Watermark>CHAN1</Watermark>
              <PanelTitle>Power vs. Time</PanelTitle>
            </PanelHead>
            <PowerChart />
            <ChartFoot axis="Time [us]" />
          </Panel>
          <Gap $h={7} />
          <Panel>
            <PanelHead>
              <Tabs><Tab $w={50}>Packet 1</Tab></Tabs>
              <Watermark>CHAN1</Watermark>
              <PanelTitle>Eye Diagram</PanelTitle>
            </PanelHead>
            <EyeChart />
            <ChartFoot axis="Time (ns)" />
          </Panel>
        </Column>
        <Divider />
        <Column>
          <Panel>
            <PanelHead>
              <PacketTabs />
              <Watermark $shift={26}>CHAN1</Watermark>
              <PanelTitle $inset>TX Quality UWBP</PanelTitle>
            </PanelHead>
            <Tables>
              <Results rows={LEFT} />
              <Results rows={RIGHT} />
            </Tables>
          </Panel>
          <Gap $h={7} />
          <Panel $active>
            <PanelHead>
              <PacketTabs />
              <Watermark>CHAN1</Watermark>
              <PanelTitle>Spectrum Mask</PanelTitle>
            </PanelHead>
            <SpectrumChart />
            <ChartFoot axis="Frequency [MHz]" />
          </Panel>
        </Column>
      </Body>
    </Page>
  );
}
